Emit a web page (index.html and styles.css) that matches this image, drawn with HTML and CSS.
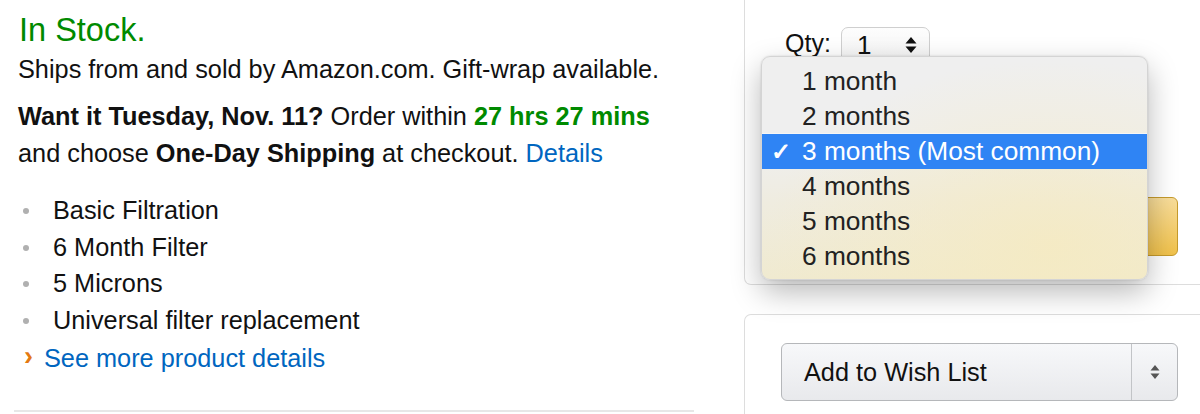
FILE: index.html
```html
<!DOCTYPE html>
<html>
<head>
<meta charset="utf-8">
<link rel="stylesheet" href="styles.css">
</head>
<body>
<div class="page">
  <div class="left">
    <div class="stock">In Stock.</div>
    <div class="ships">Ships from and sold by Amazon.com. Gift-wrap available.</div>
    <div class="delivery">
      <b>Want it Tuesday, Nov. 11?</b> Order within <b class="green">27 hrs 27 mins</b><br>
      and choose <b>One-Day Shipping</b> at checkout. <a class="link">Details</a>
    </div>
    <ul class="bullets">
      <li>Basic Filtration</li>
      <li>6 Month Filter</li>
      <li>5 Microns</li>
      <li>Universal filter replacement</li>
    </ul>
    <div class="more"><span class="chev">›</span><a class="link">See more product details</a></div>
    <div class="rule"></div>
  </div>
  <div class="right">
    <div class="box box-buy">
      <div class="qty-row">
        <span class="qty-label">Qty:</span>
        <div class="qty-select">
          <span class="qty-val">1</span>
          <svg class="updown" width="12" height="16" viewBox="0 0 12 16"><path d="M6 0 L11.5 6.5 H0.5 Z M6 16 L11.5 9.5 H0.5 Z" fill="#111"/></svg>
        </div>
      </div>
      <div class="cart-btn"></div>
    </div>
    <div class="box box-wish">
      <div class="wish-select">
        <span class="wish-label">Add to Wish List</span>
        <span class="wish-arrow"><svg width="10" height="16" viewBox="0 0 10 16"><path d="M5 1 L9.5 6.5 H0.5 Z M5 15 L9.5 9.5 H0.5 Z" fill="#555"/></svg></span>
      </div>
    </div>
    <div class="dropdown">
      <div class="opt">1 month</div>
      <div class="opt">2 months</div>
      <div class="opt sel"><span class="check">✓</span>3 months (Most common)</div>
      <div class="opt">4 months</div>
      <div class="opt">5 months</div>
      <div class="opt">6 months</div>
    </div>
  </div>
</div>
</body>
</html>
```

FILE: styles.css
```css
html, body {
  margin: 0;
  padding: 0;
  background: #fff;
  overflow: hidden;
}
body {
  width: 1200px;
  height: 414px;
  font-family: "Liberation Sans", Arial, Helvetica, sans-serif;
  color: #111;
  font-size: 25.3px;
}
.page {
  display: flex;
  align-items: flex-start;
}
.left {
  width: 676px;
  padding-left: 18px;
  padding-top: 11px;
  flex: none;
}
.stock {
  color: #008a00;
  font-size: 32.5px;
  line-height: 38px;
  margin-left: 1px;
}
.ships {
  line-height: 37px;
  margin-top: 2px;
}
.delivery {
  line-height: 37px;
  margin-top: 10px;
}
.delivery b { font-weight: bold; color: #111; }
.delivery b.green { color: #008a00; }
.link { color: #0066c0; text-decoration: none; }
.bullets {
  list-style: none;
  margin: 20px 0 0 0;
  padding: 0;
}
.bullets li {
  line-height: 36.7px;
  padding-left: 35px;
  position: relative;
}
.bullets li::before {
  content: "";
  position: absolute;
  left: 5px;
  top: 16px;
  width: 6px;
  height: 6px;
  border-radius: 50%;
  background: #b0b0b0;
}
.more {
  line-height: 37px;
  margin-top: 1px;
  display: flex;
  align-items: center;
}
.chev {
  color: #e47911;
  font-weight: bold;
  font-size: 27px;
  margin-left: 6px;
  margin-right: 11px;
  position: relative;
  top: -2px;
}
.rule {
  margin-top: 33px;
  margin-left: -4px;
  height: 2px;
  background: #e7e7e7;
}
.right {
  margin-left: 50px;
  width: 470px;
  flex: none;
  position: relative;
}
.box {
  border: 1px solid #dddddd;
  box-sizing: border-box;
}
.box-buy {
  border-top: none;
  border-radius: 0 0 0 7px;
  height: 285px;
  padding: 27px 0 0 40px;
}
.qty-row {
  display: flex;
  align-items: flex-start;
}
.qty-label {
  font-size: 25px;
  line-height: 30px;
  margin-top: 1px;
  color: #111;
  width: 56px;
}
.qty-select {
  width: 89px;
  height: 40px;
  box-sizing: border-box;
  border: 1px solid #cfcfcf;
  border-radius: 7px;
  background: linear-gradient(#fdfdfd, #f2f2f2);
  display: flex;
  align-items: flex-start;
  justify-content: space-between;
  padding: 2px 12px 0 15px;
  font-size: 26px;
  line-height: 30px;
}
.updown {
  margin-top: 7px;
}
.cart-btn {
  margin: 130px 0 0 0;
  width: 393px;
  height: 59px;
  box-sizing: border-box;
  border: 1px solid #c59a2c;
  border-radius: 6px;
  background: linear-gradient(#f8dd9a, #f0c14b);
}
.box-wish {
  margin-top: 29px;
  border-bottom: none;
  border-radius: 7px 0 0 0;
  height: 110px;
  padding: 28px 0 0 36px;
}
.wish-select {
  width: 397px;
  height: 58px;
  box-sizing: border-box;
  border: 1px solid #b5b7ba;
  border-radius: 6px;
  background: linear-gradient(#f7f8fa, #e8e9ec);
  display: flex;
  align-items: center;
}
.wish-label {
  flex: 1;
  padding-left: 22px;
  font-size: 25.3px;
  color: #111;
}
.wish-arrow {
  width: 45px;
  height: 100%;
  border-left: 1px solid #c2c4c7;
  display: flex;
  align-items: center;
  justify-content: center;
}
.dropdown {
  position: absolute;
  left: 17px;
  top: 56px;
  width: 387px;
  height: 224px;
  box-sizing: border-box;
  padding: 7px 0;
  border-radius: 9px;
  border: 1px solid #d4d4d4;
  background:
    radial-gradient(ellipse at 75% 85%, rgba(246,234,190,0.75), rgba(246,234,190,0) 70%),
    linear-gradient(#efefef 0%, #efefef 40%, #efece0 65%, #f0ead0 100%);
  box-shadow: 0 12px 30px rgba(0,0,0,0.28), 0 0 2px rgba(0,0,0,0.15);
}
.opt {
  height: 35px;
  line-height: 35px;
  padding-left: 40px;
  font-size: 26.3px;
  color: #222;
  position: relative;
}
.opt.sel {
  background: #2f84f4;
  color: #fff;
  border-top: 1px solid #f6f6f6;
  margin-top: -1px;
}
.check {
  position: absolute;
  left: 9px;
  top: 0;
  font-size: 24px;
  font-weight: bold;
}
```
